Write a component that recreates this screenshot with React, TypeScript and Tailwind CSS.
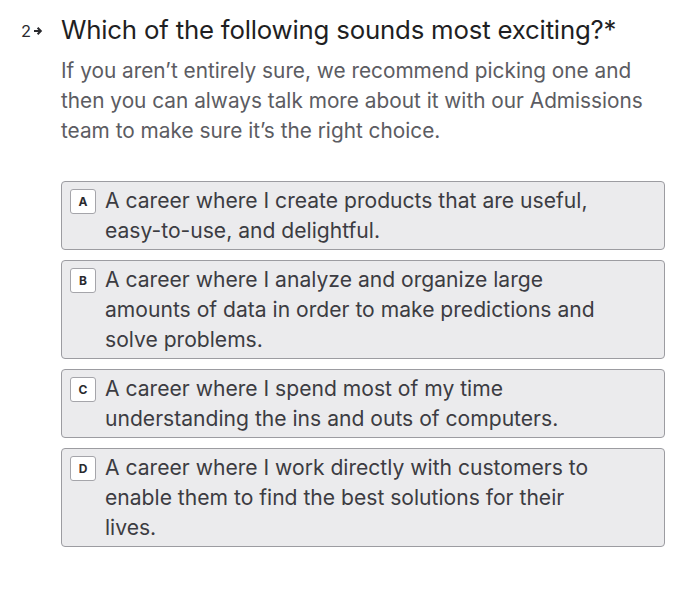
import React from "react";

const options = [
  { key: "A", lines: ["A career where I create products that are useful,", "easy-to-use, and delightful."] },
  { key: "B", lines: ["A career where I analyze and organize large", "amounts of data in order to make predictions and", "solve problems."] },
  { key: "C", lines: ["A career where I spend most of my time", "understanding the ins and outs of computers."] },
  { key: "D", lines: ["A career where I work directly with customers to", "enable them to find the best solutions for their", "lives."] },
];

export default function App() {
  return (
    <div className="w-[700px] h-[613px] bg-white" style={{ fontFamily: "Inter, 'Noto Sans', sans-serif" }}>
      <div className="relative pt-[12px] pl-[61px] pr-[35px]">
        <div className="absolute left-[21px] top-[19px] flex items-center gap-[2px] text-[16.5px] text-[#2a2a2e]">
          <span>2</span>
          <svg width="10" height="10" viewBox="0 0 10 10" fill="none" stroke="#2a2a2e" strokeWidth="2">
            <path d="M1 5h6.5M4.6 1.8 7.8 5 4.6 8.2" />
          </svg>
        </div>
        <h1 className="text-[25.8px] leading-[36px] text-[#1f1f23] tracking-[-0.2px]">
          Which of the following sounds most exciting?*
        </h1>
        <p className="mt-[8px] text-[20.8px] leading-[30px] text-[#5c5c62] w-[610px]">
          <span className="block whitespace-nowrap">If you aren’t entirely sure, we recommend picking one and</span>
          <span className="block whitespace-nowrap">then you can always talk more about it with our Admissions</span>
          <span className="block whitespace-nowrap">team to make sure it’s the right choice.</span>
        </p>
        <div className="mt-[35px] flex flex-col gap-[10px] w-[604px]">
          {options.map((o) => (
            <div key={o.key} className="flex items-start rounded-[4px] border border-[#9c9ca1] bg-[#ebebed] pl-[8px] pr-[12px] pt-[4px] pb-[3px]">
              <div className="mt-[3px] flex h-[25px] w-[26px] shrink-0 items-center justify-center rounded-[3px] border border-[#a5a5aa] bg-white text-[12px] font-bold text-[#2a2a2e]">
                {o.key}
              </div>
              <div className="ml-[9px] text-[21.1px] leading-[30px] text-[#3c3c42]">
                {o.lines.map((l, i) => (
                  <span key={i} className="block whitespace-nowrap">{l}</span>
                ))}
              </div>
            </div>
          ))}
        </div>
      </div>
    </div>
  );
}
